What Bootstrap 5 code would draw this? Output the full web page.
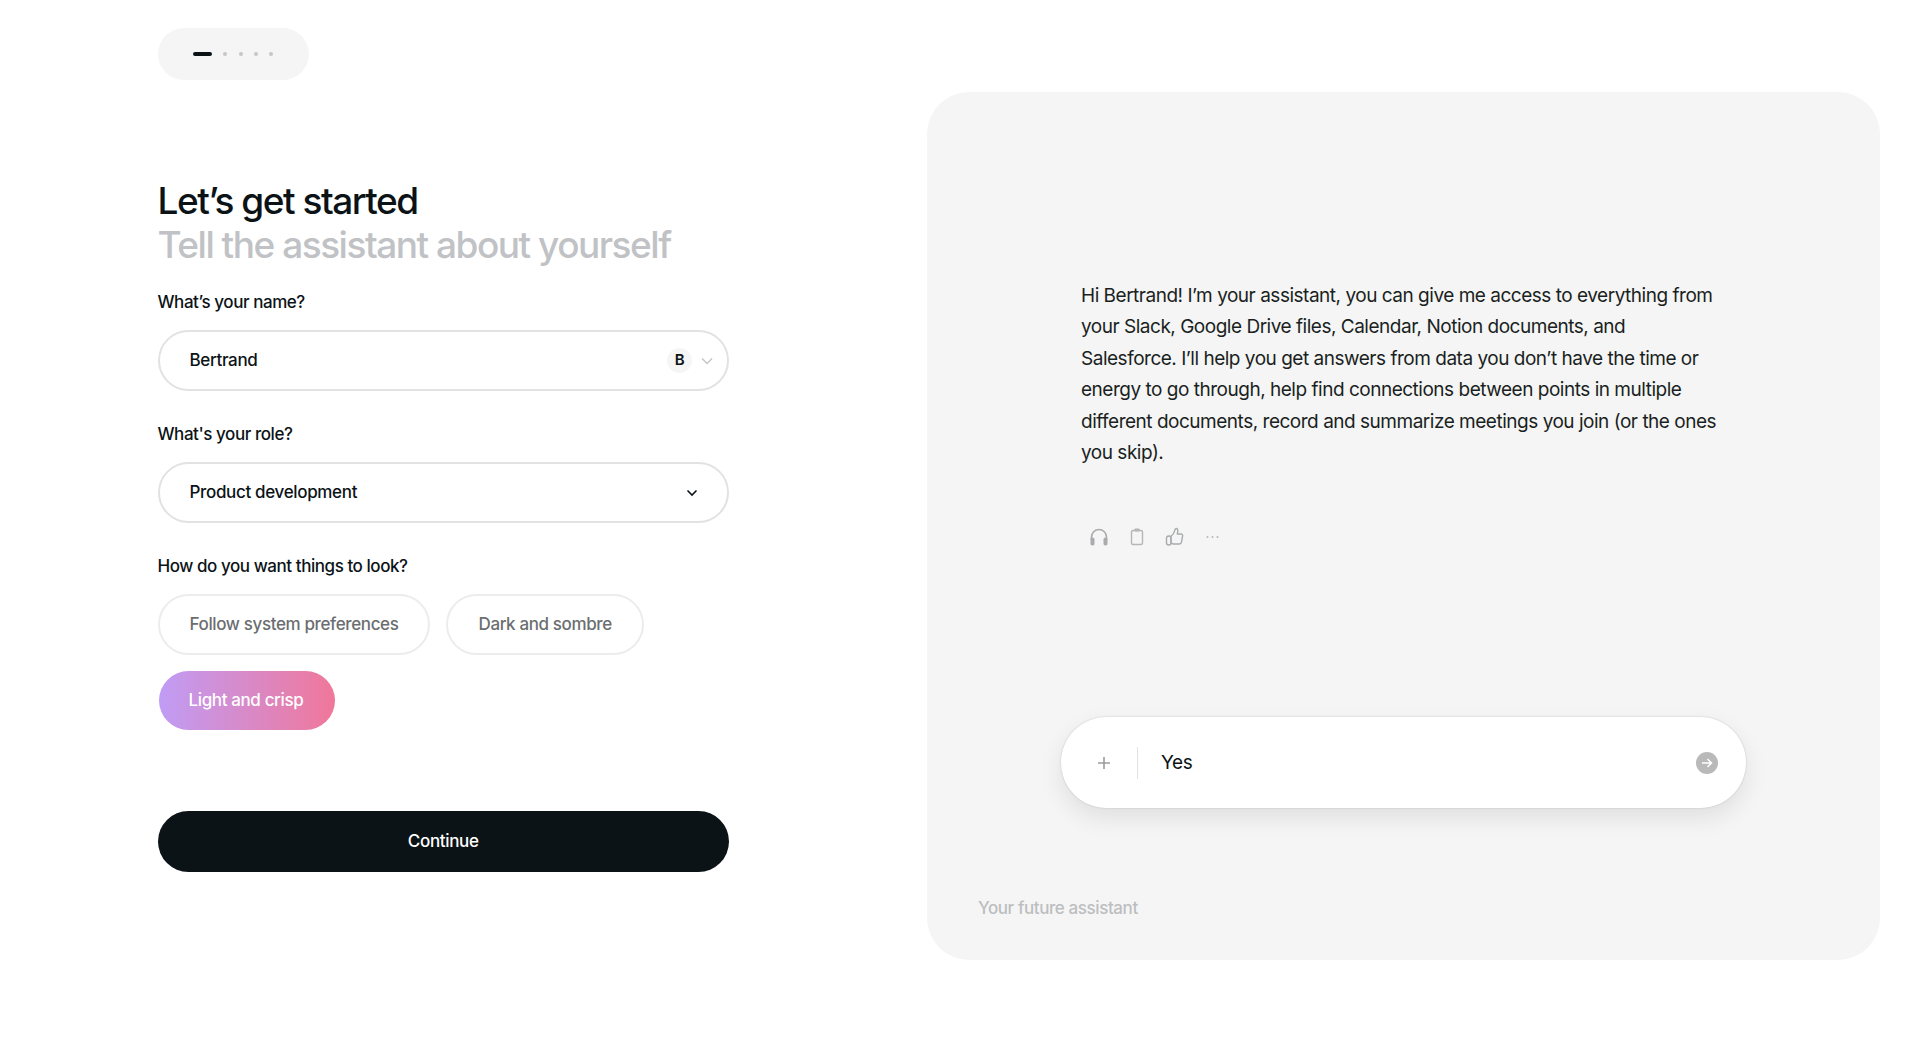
<!DOCTYPE html>
<html lang="en">
<head>
    <meta charset="UTF-8">
    <meta name="viewport" content="width=device-width, initial-scale=1.0">
    <title>Onboarding</title>
    <link href="https://cdn.jsdelivr.net/npm/bootstrap@5.3.3/dist/css/bootstrap.min.css" rel="stylesheet">
    <style>
        body {
            font-family: "Inter", "Liberation Sans", sans-serif;
            color: #0c1317;
            background: #fff;
            height: 1052px;
            overflow: hidden;
        }
        .left-col {
            width: 927px;
            padding: 28px 0 0 157.5px;
            flex: none;
        }
        .form-col { width: 571.5px; }
        .steps {
            width: 151px;
            height: 52px;
            background: #f5f5f5;
            padding-left: 35.5px;
            gap: 11.3px;
        }
        .step-dash { width: 19px; height: 4px; border-radius: 2px; background: #0c1317; }
        .step-dot { width: 4px; height: 4px; border-radius: 50%; background: #c4c6c8; }
        .title-main, .title-sub {
            font-size: 37px;
            line-height: 44px;
            font-weight: 500;
            letter-spacing: -0.04em;
            margin: 0;
        }
        .title-main { margin-top: 99px; }
        .title-sub { color: #c0c2c5; margin-bottom: 23px; }
        .field-label {
            display: block;
            font-size: 17px;
            line-height: 24px;
            font-weight: 500;
            letter-spacing: -0.026em;
            margin: 0 0 16px;
        }
        .pill-field {
            height: 61px;
            border: 2px solid #e2e2e2;
            padding: 0 30px;
            font-size: 17px;
            font-weight: 500;
            letter-spacing: -0.02em;
            margin-bottom: 31px;
        }
        .initial-badge {
            width: 25px;
            height: 25px;
            background: #f5f5f5;
            font-size: 15px;
            font-weight: 600;
            margin-right: 9px;
        }
        .name-chevron { margin-right: -16px; }
        .role-chevron { margin-right: -1px; }
        .option-wrap { gap: 16px; margin-bottom: 81px; }
        .option-pill {
            height: 61px;
            padding: 0 30px;
            border: 2px solid #ececec;
            border-radius: 31px;
            background: #fff;
            color: #6b6e70;
            font-size: 17px;
            font-weight: 500;
            letter-spacing: -0.022em;
        }
        .option-active {
            height: 59px;
            margin-left: 1px;
            padding-right: 32px;
            border: 0;
            color: #fff;
            background: linear-gradient(90deg, #c09cf5, #f0779a);
        }
        .continue-btn {
            height: 61px;
            background: #0c1317;
            color: #fff;
            font-size: 17px;
            font-weight: 500;
            letter-spacing: -0.02em;
        }
        .assistant-panel {
            width: 953px;
            height: 868px;
            margin-top: 92px;
            background: #f5f5f5;
            border-radius: 42px;
            padding: 188px 0 0 154px;
        }
        .assistant-msg {
            width: 640px;
            font-size: 19px;
            line-height: 31.4px;
            letter-spacing: -0.0255em;
            margin: 0 0 57px;
            color: #1a1f22;
        }
        .msg-actions { gap: 20px; margin-left: 8px; height: 24px; }
        .composer {
            width: 685px;
            height: 91px;
            margin: 168px 0 0 -20px;
            background: #fff;
            box-shadow: 0 10px 24px rgba(0, 0, 0, .09), 0 0 2px rgba(0, 0, 0, .18);
            padding: 0 28px 0 36px;
            font-size: 19px;
            letter-spacing: -0.02em;
        }
        .composer-divider { width: 1px; height: 32px; background: #e2e2e2; margin: 0 23px 0 26px; }
        .send-btn { width: 22px; height: 22px; background: #b9b9b9; }
        .panel-foot {
            margin: 88px 0 0 -103px;
            font-size: 17px;
            line-height: 24px;
            font-weight: 500;
            letter-spacing: -0.024em;
            color: #bcbec0;
        }
    </style>
</head>
<body>
    <div class="d-flex">
        <div class="left-col">
            <div class="steps d-flex align-items-center rounded-pill">
                <span class="step-dash"></span>
                <span class="step-dot"></span>
                <span class="step-dot"></span>
                <span class="step-dot"></span>
                <span class="step-dot"></span>
            </div>

            <h1 class="title-main">Let’s get started</h1>
            <h2 class="title-sub">Tell the assistant about yourself</h2>

            <div class="form-col">
                <label class="field-label">What’s your name?</label>
                <div class="pill-field d-flex align-items-center rounded-pill">
                    <span class="flex-grow-1">Bertrand</span>
                    <span class="initial-badge d-flex align-items-center justify-content-center rounded-circle">B</span>
                    <svg class="name-chevron" width="12" height="8" viewBox="0 0 12 8" fill="none" stroke="#c4c6c8" stroke-width="1.5"><path d="M1 1.5l5 5 5-5"/></svg>
                </div>

                <label class="field-label">What's your role?</label>
                <div class="pill-field d-flex align-items-center rounded-pill">
                    <span class="flex-grow-1">Product development</span>
                    <svg class="role-chevron" width="12" height="8" viewBox="0 0 12 8" fill="none" stroke="#0c1317" stroke-width="1.6"><path d="M1.5 1.5l4.5 4.5 4.5-4.5"/></svg>
                </div>

                <label class="field-label">How do you want things to look?</label>
                <div class="option-wrap d-flex flex-wrap">
                    <button class="option-pill" type="button">Follow system preferences</button>
                    <button class="option-pill" type="button">Dark and sombre</button>
                    <button class="option-pill option-active" type="button">Light and crisp</button>
                </div>

                <button class="continue-btn btn w-100 rounded-pill border-0" type="button">Continue</button>
            </div>
        </div>

        <div class="assistant-panel">
            <p class="assistant-msg">Hi Bertrand! I’m your assistant, you can give me access to everything from your Slack, Google Drive files, Calendar, Notion documents, and Salesforce. I’ll help you get answers from data you don’t have the time or energy to go through, help find connections between points in multiple different documents, record and summarize meetings you join (or the ones you skip).</p>

            <div class="msg-actions d-flex align-items-center">
                <svg width="20" height="20" viewBox="0 0 20 20" fill="none" stroke="#a9abad" stroke-width="1.6"><path d="M2.5 13V10a7.5 7.5 0 0 1 15 0v3"/><rect x="1.5" y="10.5" width="4" height="8" rx="1.8" fill="#a9abad" stroke="none"/><rect x="14.500" y="10.5" width="4" height="8" rx="1.800" fill="#a9abad" stroke="none"/></svg>
                <svg width="16" height="20" viewBox="0 0 16 20" fill="none" stroke="#b4b6b8" stroke-width="1.4"><rect x="2.5" y="3.5" width="11" height="14" rx="1.5"/><rect x="5.5" y="1.5" width="5" height="3" rx=".8" fill="#b4b6b8" stroke="none"/></svg>
                <svg width="20" height="20" viewBox="0 0 20 20" fill="none" stroke="#a9abad" stroke-width="1.4" stroke-linejoin="round"><path d="M6 9.2c1.6-1 3-3 3.6-5.4.3-1.3.6-2.3 1.6-2.3 1.300 0 1.800 1.300 1.600 2.800l-.5 2.700h3.600c1.300 0 2 1 1.700 2.200l-1.100 6c-.2 1.200-1 1.800-2.100 1.800H9c-1.500 0-2.300-.5-3-1.100z"/><rect x="1.500" y="9" width="4.500" height="9" rx="2.200"/></svg>
                <svg width="16" height="20" viewBox="0 0 16 20" fill="#b4b6b8"><circle cx="2.500" cy="10" r="1"/><circle cx="7.500" cy="10" r="1"/><circle cx="12.500" cy="10" r="1"/></svg>
            </div>

            <div class="composer d-flex align-items-center rounded-pill">
                <svg width="14" height="14" viewBox="0 0 14 14" stroke="#9a9c9e" stroke-width="1.600"><path d="M7 1v12M1 7h12"/></svg>
                <span class="composer-divider"></span>
                <span class="flex-grow-1">Yes</span>
                <span class="send-btn d-flex align-items-center justify-content-center rounded-circle">
                    <svg width="12" height="12" viewBox="0 0 12 12" fill="none" stroke="#fff" stroke-width="1.500"><path d="M1 6h9.500M6.500 2l4 4-4 4"/></svg>
                </span>
            </div>

            <div class="panel-foot">Your future assistant</div>
        </div>
    </div>

    <script src="https://cdn.jsdelivr.net/npm/bootstrap@5.3.3/dist/js/bootstrap.bundle.min.js"></script>
</body>
</html>
